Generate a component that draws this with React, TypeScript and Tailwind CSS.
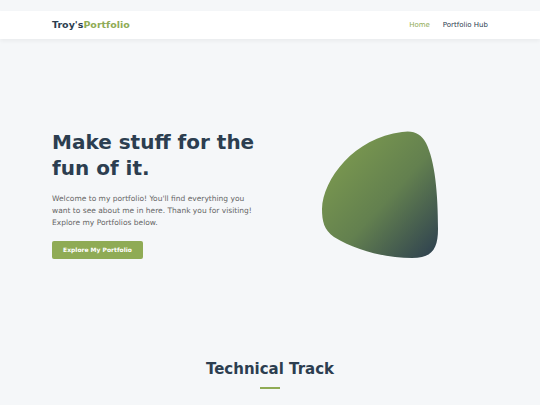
import React from "react";

function Blob() {
  return (
    <svg viewBox="0 0 116 128" className="w-[116px] h-[128px] overflow-visible">
      <defs>
        <linearGradient id="blobGrad" x1="0.1" y1="0.1" x2="1" y2="1">
          <stop offset="0%" stopColor="#7d9b4f" />
          <stop offset="50%" stopColor="#63804f" />
          <stop offset="100%" stopColor="#2c3e50" />
        </linearGradient>
      </defs>
      <path
        d="M80 1 C92 -1 99 3 104 12 C113 30 116 62 116 98 C116 118 110 127 90 127 C65 127 35 120 12 106 C2 99 0 90 0 78 C1 48 32 7 80 1 Z"
        fill="url(#blobGrad)"
      />
    </svg>
  );
}

export default function App() {
  return (
    <div
      className="min-h-[405px] bg-[#f5f7f9] pt-[11px]"
      style={{ fontFamily: '"DejaVu Sans", Verdana, sans-serif' }}
    >
      <header className="bg-white h-[28px] shadow-[0_2px_4px_rgba(0,0,0,0.05)]">
        <div className="h-full px-[52px] flex items-center justify-between">
          <div className="text-[9.5px] font-bold text-[#2c3e50]">
            Troy's<span className="text-[#8fab55]">Portfolio</span>
          </div>
          <nav className="flex items-center gap-[13px] text-[7px]">
            <a className="text-[#8fab55]">Home</a>
            <a className="text-[#2c3e50]">Portfolio Hub</a>
          </nav>
        </div>
      </header>

      <section className="px-[52px] h-[310px] flex items-center">
        <div className="w-[220px]">
          <h1 className="text-[20px] leading-[26px] font-bold text-[#2c3e50]">
            Make stuff for the fun of it.
          </h1>
          <p className="mt-[12px] w-[203px] text-[7.5px] leading-[12px] text-[#666]">
            Welcome to my portfolio! You'll find everything you want to see about me in here. Thank you for visiting!
            Explore my Portfolios below.
          </p>
          <button className="mt-[12px] h-[18px] w-[91px] rounded-[2px] bg-[#8fab55] text-white text-[6px] font-bold">
            Explore My Portfolio
          </button>
        </div>
        <div className="ml-[50px] pt-[2px]">
          <Blob />
        </div>
      </section>

      <section className="flex flex-col items-center pt-[9px]">
        <h2 className="text-[15px] font-bold text-[#2c3e50]">Technical Track</h2>
        <div className="mt-[6px] w-[20px] h-[2px] bg-[#8fab55]" />
      </section>
    </div>
  );
}
